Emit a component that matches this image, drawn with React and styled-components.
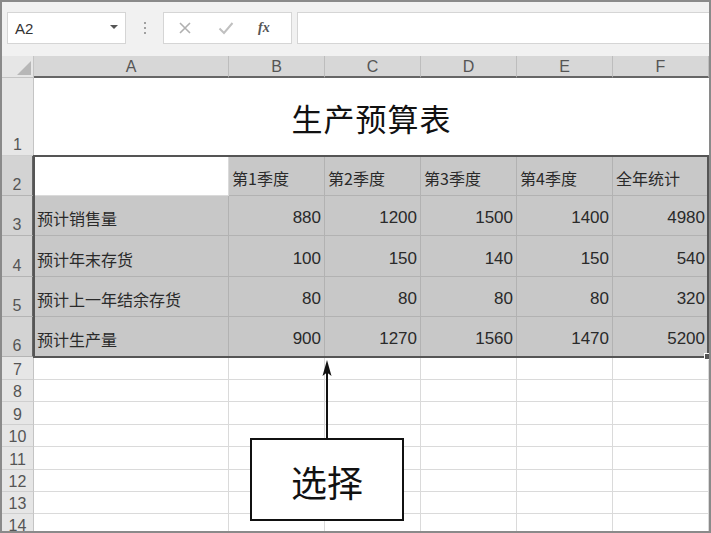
import React from 'react';
import styled, { createGlobalStyle, css } from 'styled-components';

const Global = createGlobalStyle`
  html, body { margin: 0; padding: 0; background: #fff; }
  body { font-family: "Liberation Sans", "Noto Sans CJK SC", sans-serif; }
`;

const CJK = '"Noto Sans CJK SC", "Liberation Sans", sans-serif';

const place = css`
  grid-row: ${p => p.$r};
  grid-column: ${p => p.$c};
`;

const Frame = styled.div`
  position: relative;
  width: 711px;
  height: 533px;
  box-sizing: border-box;
  border: 2px solid #8a8a8a;
  background: #f1f1f1;
  overflow: hidden;
  display: flex;
  flex-direction: column;
`;

const Toolbar = styled.div`
  height: 54px;
  flex: none;
  box-sizing: border-box;
  padding: 10px 0 0 5px;
  display: flex;
  align-items: flex-start;
`;

const NameBox = styled.div`
  width: 119px;
  height: 32px;
  box-sizing: border-box;
  background: #fff;
  border: 1px solid #d5d5d5;
  display: flex;
  align-items: center;
  justify-content: space-between;
  padding: 0 7px 0 7px;
  font-size: 15px;
  color: #333;
`;

const Caret = styled.span`
  width: 0;
  height: 0;
  border-left: 4px solid transparent;
  border-right: 4px solid transparent;
  border-top: 4px solid #555;
  margin-top: -3px;
`;

const Dots = styled.div`
  width: 37px;
  height: 32px;
  display: flex;
  flex-direction: column;
  align-items: center;
  justify-content: center;
  gap: 3px;
  & > i { width: 2px; height: 2px; background: #a0a0a0; display: block; }
`;

const FxBox = styled.div`
  width: 129px;
  height: 32px;
  box-sizing: border-box;
  background: #fff;
  border: 1px solid #d5d5d5;
  display: flex;
  align-items: center;
  padding-left: 14px;
  gap: 26px;
`;

const Fx = styled.span`
  font-family: "Liberation Serif", "DejaVu Serif", serif;
  font-style: italic;
  font-weight: bold;
  font-size: 14px;
  color: #555;
  margin-left: -2px;
`;

const Input = styled.div`
  flex: 1;
  height: 32px;
  margin-left: 5px;
  box-sizing: border-box;
  background: #fff;
  border: 1px solid #d5d5d5;
  border-right: none;
`;

const Sheet = styled.div`
  flex: 1;
  display: grid;
  grid-template-columns: 32px 195px repeat(5, 96px);
  background: #fff;
  overflow: hidden;
`;

const Corner = styled.div`
  ${place}
  background: #e6e6e6;
  border-right: 1px solid #c4c4c4;
  border-bottom: 1px solid #c4c4c4;
  box-sizing: border-box;
  display: flex;
  align-items: flex-end;
  justify-content: flex-end;
  padding: 0 2px 2px 0;
`;

const ColHead = styled.div`
  ${place}
  background: #d7d7d7;
  border-right: 1px solid #bdbdbd;
  border-bottom: 2px solid #666;
  box-sizing: border-box;
  display: flex;
  align-items: center;
  justify-content: center;
  font-size: 16px;
  color: #555;
  padding-top: 2px;
`;

const RowHead = styled.div`
  ${place}
  background: ${p => (p.$sel ? '#d3d3d3' : '#e6e6e6')};
  border-bottom: 1px solid ${p => (p.$sel ? '#b4b4b4' : '#cfcfcf')};
  border-right: ${p => (p.$sel ? '2px solid #666' : '1px solid #c4c4c4')};
  box-sizing: border-box;
  display: flex;
  align-items: flex-end;
  justify-content: center;
  font-size: 16px;
  line-height: 16px;
  color: #555;
  padding-bottom: ${p => (p.$small ? '1px' : '2px')};
`;

const Cell = styled.div`
  ${place}
  background: ${p => (p.$sel ? '#c8c8c8' : '#fff')};
  border-right: 1px solid ${p => (p.$sel ? '#b2b2b2' : '#dadada')};
  border-bottom: 1px solid ${p => (p.$sel ? '#b2b2b2' : '#dadada')};
  box-sizing: border-box;
  display: flex;
  align-items: flex-end;
  justify-content: ${p => (p.$num ? 'flex-end' : 'flex-start')};
  padding: 0 3px 7px 3px;
  font-family: ${p => (p.$num ? '"Liberation Sans", sans-serif' : CJK)};
  font-size: ${p => (p.$num ? '17px' : '16px')};
  line-height: 20px;
  color: #2a2a2a;
  white-space: nowrap;
`;

const Title = styled.div`
  ${place}
  border-bottom: 1px solid #dadada;
  display: flex;
  align-items: center;
  justify-content: center;
  font-family: ${CJK};
  font-size: 31px;
  letter-spacing: 1px;
  color: #111;
  padding-top: 2px;
`;

const Selection = styled.div`
  ${place}
  position: relative;
  margin: -1px 0 -1px -1px;
  border: 2px solid #555;
  pointer-events: none;
`;

const Handle = styled.div`
  position: absolute;
  right: -4px;
  bottom: -4px;
  width: 5px;
  height: 5px;
  background: #555;
  border: 1px solid #fff;
`;

const Arrow = styled.svg`
  position: absolute;
  left: 317px;
  top: 357px;
`;

const Callout = styled.div`
  position: absolute;
  left: 248px;
  top: 436px;
  width: 154px;
  height: 83px;
  box-sizing: border-box;
  border: 2px solid #111;
  background: #fff;
  display: flex;
  align-items: center;
  justify-content: center;
  font-family: ${CJK};
  font-size: 36px;
  color: #111;
  padding-top: 2px;
`;

const cols = ['A', 'B', 'C', 'D', 'E', 'F'];
const heights = [78, 40, 40, 41, 40, 40, 23, 22, 23, 22, 23, 22, 22, 22];
const data = [
  ['', '第1季度', '第2季度', '第3季度', '第4季度', '全年统计'],
  ['预计销售量', '880', '1200', '1500', '1400', '4980'],
  ['预计年末存货', '100', '150', '140', '150', '540'],
  ['预计上一年结余存货', '80', '80', '80', '80', '320'],
  ['预计生产量', '900', '1270', '1560', '1470', '5200'],
];

export default function App() {
  return (
    <>
      <Global />
      <Frame>
        <Toolbar>
          <NameBox>
            <span>A2</span>
            <Caret />
          </NameBox>
          <Dots><i /><i /><i /></Dots>
          <FxBox>
            <svg width="14" height="14" viewBox="0 0 14 14">
              <path d="M2 2 L12 12 M12 2 L2 12" stroke="#b0b0b0" strokeWidth="1.6" fill="none" />
            </svg>
            <svg width="16" height="14" viewBox="0 0 16 14">
              <path d="M1.5 7.5 L6 12 L14.5 2" stroke="#c0c0c0" strokeWidth="2" fill="none" />
            </svg>
            <Fx>fx</Fx>
          </FxBox>
          <Input />
        </Toolbar>
        <Sheet style={{ gridTemplateRows: `22px ${heights.map(h => h + 'px').join(' ')}` }}>
          <Corner $r={1} $c={1}>
            <svg width="14" height="14" viewBox="0 0 14 14">
              <path d="M14 0 L14 14 L0 14 Z" fill="#b7b7b7" />
            </svg>
          </Corner>
          {cols.map((c, ci) => (
            <ColHead key={c} $r={1} $c={ci + 2}>{c}</ColHead>
          ))}
          {heights.map((h, i) => {
            const r = i + 1;
            const gr = r + 1;
            const sel = r >= 2 && r <= 6;
            const head = (
              <RowHead key={'h' + r} $r={gr} $c={1} $sel={sel} $small={r > 6}>
                {r}
              </RowHead>
            );
            if (r === 1) {
              return [head, <Title key="t" $r={gr} $c="2 / 8">生产预算表</Title>];
            }
            const row = sel ? data[r - 2] : ['', '', '', '', '', ''];
            return [
              head,
              ...row.map((v, ci) => (
                <Cell
                  key={r + '-' + ci}
                  $r={gr}
                  $c={ci + 2}
                  $sel={sel && !(r === 2 && ci === 0)}
                  $num={r > 2 && ci > 0}
                >
                  {v}
                </Cell>
              )),
            ];
          })}
          <Selection $r="3 / 8" $c="2 / 8">
            <Handle />
          </Selection>
        </Sheet>
        <Arrow width="16" height="82" viewBox="0 0 16 82">
          <path d="M8 10 L8 82" stroke="#111" strokeWidth="2" />
          <path d="M8 1 L12.5 17 L8 13.5 L3.5 17 Z" fill="#111" />
        </Arrow>
        <Callout>选择</Callout>
      </Frame>
    </>
  );
}
